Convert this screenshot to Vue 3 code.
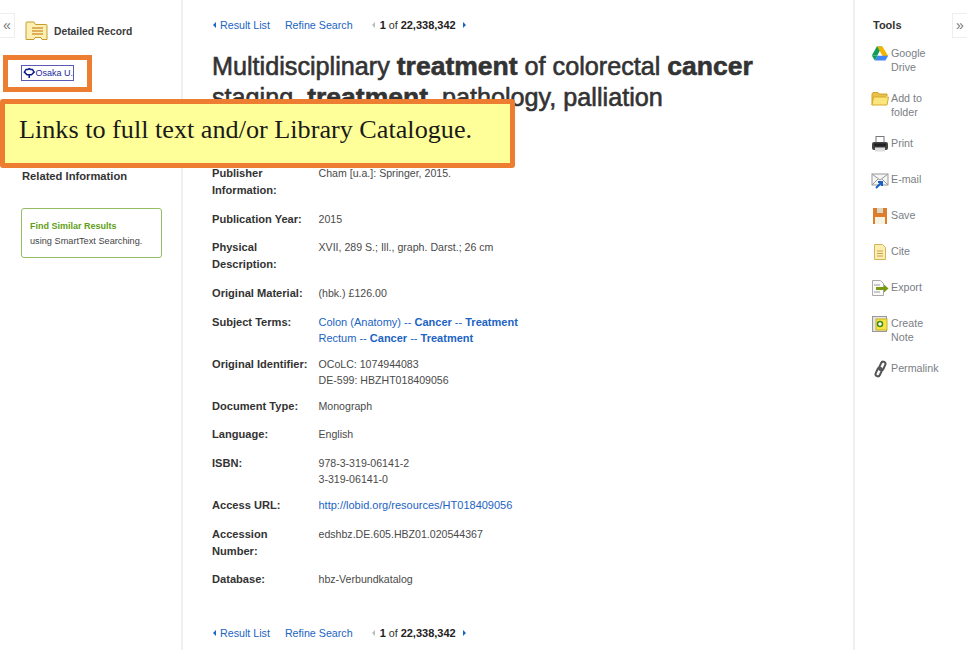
<script setup>
const rows = [
  { label: 'Publisher Information:', lines: [[{ t: 'Cham [u.a.]: Springer, 2015.' }]], narrow: true },
  { label: 'Publication Year:', lines: [[{ t: '2015' }]] },
  { label: 'Physical Description:', lines: [[{ t: 'XVII, 289 S.; Ill., graph. Darst.; 26 cm' }]], narrow: true },
  { label: 'Original Material:', lines: [[{ t: '(hbk.) £126.00' }]] },
  {
    label: 'Subject Terms:',
    lines: [
      [{ t: 'Colon (Anatomy) -- ', a: 1 }, { t: 'Cancer', a: 1, b: 1 }, { t: ' -- ', a: 1 }, { t: 'Treatment', a: 1, b: 1 }],
      [{ t: 'Rectum -- ', a: 1 }, { t: 'Cancer', a: 1, b: 1 }, { t: ' -- ', a: 1 }, { t: 'Treatment', a: 1, b: 1 }]
    ]
  },
  { label: 'Original Identifier:', lines: [[{ t: 'OCoLC: 1074944083' }], [{ t: 'DE-599: HBZHT018409056' }]] },
  { label: 'Document Type:', lines: [[{ t: 'Monograph' }]] },
  { label: 'Language:', lines: [[{ t: 'English' }]] },
  { label: 'ISBN:', lines: [[{ t: '978-3-319-06141-2' }], [{ t: '3-319-06141-0' }]] },
  { label: 'Access URL:', lines: [[{ t: 'http://lobid.org/resources/HT018409056', a: 1 }]] },
  { label: 'Accession Number:', lines: [[{ t: 'edshbz.DE.605.HBZ01.020544367' }]], narrow: true },
  { label: 'Database:', lines: [[{ t: 'hbz-Verbundkatalog' }]] }
]
const tools = [
  { id: 'drive', lines: ['Google', 'Drive'] },
  { id: 'folder', lines: ['Add to', 'folder'] },
  { id: 'print', lines: ['Print'] },
  { id: 'mail', lines: ['E-mail'] },
  { id: 'save', lines: ['Save'] },
  { id: 'cite', lines: ['Cite'] },
  { id: 'export', lines: ['Export'] },
  { id: 'note', lines: ['Create', 'Note'] },
  { id: 'link', lines: ['Permalink'] }
]
</script>

<template>
  <div class="page">
    <aside class="left">
      <div class="tab tab-left">«</div>
      <div class="record-head">
        <svg width="23" height="20" viewBox="0 0 23 20">
          <path d="M1 18.500V2q0-1 1-1h7l1.500 2.500H21q1 0 1 1v14h-5l-1-2h-6l-1 2z" fill="#fcefb4" stroke="#c79c2c"/>
          <path d="M7 7h11M7 10h11M7 13h11" stroke="#d59a3c" stroke-width="1.500"/>
        </svg>
        <span>Detailed Record</span>
      </div>
      <div class="logo-row">
        <div class="logo">
          <svg width="14" height="14" viewBox="0 0 14 14">
            <path d="M7 12.500V9M7 2l1.500 1 2 0 2 3-3 3H4.500l-3-3 2-3 2 0z" fill="#fff" stroke="#0b1a8a" stroke-width="1.700"/>
          </svg>
          <span>Osaka U.</span>
        </div>
      </div>
      <h3 class="related">Related Information</h3>
      <div class="similar">
        <strong>Find Similar Results</strong>
        <span>using SmartText Searching.</span>
      </div>
    </aside>

    <main class="center">
      <nav class="nav">
        <span class="tri tri-l"></span><a>Result List</a>
        <a class="refine">Refine Search</a>
        <span class="pager">
          <span class="tri tri-l muted"></span>
          <b>1</b> of <b>22,338,342</b>
          <span class="tri tri-r"></span>
        </span>
      </nav>
      <h1 class="title">Multidisciplinary <b>treatment</b> of colorectal <b>cancer</b> staging, <b>treatment</b>, pathology, palliation</h1>
      <div class="rows">
        <div v-for="r in rows" :key="r.label" class="row">
          <div class="label" :class="{ narrow: r.narrow }">{{ r.label }}</div>
          <div class="value">
            <div v-for="(l, i) in r.lines" :key="i">
              <span v-for="(p, j) in l" :key="j" :class="{ link: p.a, bold: p.b }">{{ p.t }}</span>
            </div>
          </div>
        </div>
      </div>
      <nav class="nav nav-bottom">
        <span class="tri tri-l"></span><a>Result List</a>
        <a class="refine">Refine Search</a>
        <span class="pager">
          <span class="tri tri-l muted"></span>
          <b>1</b> of <b>22,338,342</b>
          <span class="tri tri-r"></span>
        </span>
      </nav>
    </main>

    <aside class="right">
      <div class="tab tab-right">»</div>
      <h3 class="tools-head">Tools</h3>
      <ul class="tools">
        <li v-for="t in tools" :key="t.id" class="tool" :class="'t-' + t.id">
          <svg width="18" height="18" viewBox="0 0 18 18" class="tool-icon">
            <template v-if="t.id === 'drive'">
              <path d="M5.800 1.500h5.400L6.200 10.500H.8z" fill="#0f9d58"/>
              <path d="M6.200 1.500h5.200l5.800 9.500h-5.600z" fill="#f4b400"/>
              <path d="M3.800 15.500l2.800-4.800h10.600l-2.800 4.800z" fill="#4285f4"/>
              <path d="M.8 10.500l3 5 2.900-5z" fill="#0f9d58"/>
            </template>
            <template v-else-if="t.id === 'folder'">
              <path d="M1 15V4l1-1.500h5l1 1.500h8v2" fill="#e8c04a" stroke="#d1a227"/>
              <path d="M1 15l1.500-8h15l-1.500 8z" fill="#fbe67e" stroke="#d6ab2c"/>
            </template>
            <template v-else-if="t.id === 'print'">
              <rect x="5" y="1.500" width="8" height="6" fill="#fff" stroke="#777"/>
              <rect x="1" y="7" width="16" height="8" rx="2" fill="#444"/>
              <rect x="3" y="8.500" width="12" height="3" fill="#222"/>
              <rect x="4" y="12.500" width="10" height="4" fill="#ddd"/>
            </template>
            <template v-else-if="t.id === 'mail'">
              <rect x="1" y="3" width="16" height="11" fill="#f5f5f5" stroke="#999"/>
              <path d="M1 3l8 6 8-6M1 14l6-6M17 14l-6-6" fill="none" stroke="#999"/>
              <path d="M5 17l5-5M7 11h4v4" fill="none" stroke="#1a5fc4" stroke-width="2"/>
            </template>
            <template v-else-if="t.id === 'save'">
              <rect x="2" y="1" width="14" height="16" fill="#dd7d2b"/>
              <rect x="6" y="1" width="6" height="5" fill="#d9d6c6"/>
              <rect x="4" y="10" width="10" height="7" fill="#f7f3e2"/>
            </template>
            <template v-else-if="t.id === 'cite'">
              <path d="M3.500 1.500h8l3 3v12h-11z" fill="#fbeeb0" stroke="#d4b45a"/>
              <path d="M6 8h6M6 10.500h6M6 13h6" stroke="#c9a255"/>
            </template>
            <template v-else-if="t.id === 'export'">
              <path d="M1.500 1.500h8l3 3v12h-11z" fill="#fafafa" stroke="#aaa"/>
              <path d="M3 6h6M3 13h6" stroke="#999"/>
              <path d="M5 8h8V5.500l4.500 4-4.500 4V11H5z" fill="#7a9a12"/>
            </template>
            <template v-else-if="t.id === 'note'">
              <rect x="1.500" y="1.500" width="14" height="15" fill="#e4e4e4" stroke="#999"/>
              <rect x="5" y="4" width="11" height="11" fill="#f7e548" stroke="#c9b21d"/>
              <circle cx="9" cy="9" r="2.500" fill="#fff" stroke="#3f8a1b" stroke-width="1.500"/>
            </template>
            <template v-else>
              <g fill="none" stroke="#555" stroke-width="2">
                <rect x="9" y="1.500" width="4.500" height="9" rx="2.250" transform="rotate(25 11.250 6)"/>
                <rect x="5.500" y="7.500" width="4.500" height="9" rx="2.250" transform="rotate(25 7.750 12)"/>
              </g>
            </template>
          </svg>
          <span class="tool-text"><span v-for="l in t.lines" :key="l">{{ l }}</span></span>
        </li>
      </ul>
    </aside>

    <div class="hl-logo"></div>
    <div class="callout">Links to full text and/or Library Catalogue.</div>
  </div>
</template>

<style>
html, body { margin: 0; background: #fff; }
</style>

<style scoped>
.page {
  position: relative;
  display: flex;
  width: 967px;
  height: 650px;
  overflow: hidden;
  background: #fff;
  font-family: "Liberation Sans", Arial, sans-serif;
  font-size: 10.700px;
  color: #333;
}
.left {
  position: relative;
  flex: 0 0 183px;
  box-sizing: border-box;
  border-right: 2px solid #efefef;
  padding: 20px 0 0 21px;
}
.tab {
  position: absolute;
  top: 13px;
  box-sizing: border-box;
  width: 15px;
  height: 25px;
  background: #fff;
  border: 1px solid #eee;
  color: #777;
  font-size: 14px;
  line-height: 22px;
  text-align: center;
}
.tab-left { left: 0; border-left: 0; }
.tab-right { right: 0; border-right: 0; }
.record-head {
  display: flex;
  align-items: center;
  gap: 6px;
  margin-left: 4px;
  height: 22px;
  font-weight: 700;
  font-size: 10.300px;
  color: #3b3b3b;
}
.logo-row { margin-top: 23px; height: 16px; display: flex; }
.logo {
  box-sizing: border-box;
  width: 53px;
  height: 16px;
  border: 1px solid #5a5ab5;
  display: flex;
  align-items: center;
  padding-left: 1px;
  color: #1b2a9c;
  font-size: 9px;
  line-height: 14px;
  white-space: nowrap;
}
.related {
  margin: 88px 0 0 1px;
  font-size: 11.200px;
  line-height: 14px;
  color: #333;
}
.similar {
  display: flex;
  flex-direction: column;
  box-sizing: border-box;
  width: 141px;
  height: 50px;
  margin-top: 25px;
  padding: 10px 8px 0;
  border: 1px solid #94bd66;
  border-radius: 3px;
  font-size: 9.200px;
  line-height: 15px;
  color: #444;
}
.similar strong { color: #5f9e17; font-size: 9px; }
.center {
  flex: 1;
  padding: 0 0 0 29px;
  min-width: 0;
}
.nav {
  display: flex;
  align-items: center;
  height: 14px;
  margin-top: 18px;
  white-space: nowrap;
  color: #1c63c4;
}
.refine { margin-left: 15px; }
.pager { margin-left: 19px; color: #333; display: inline-flex; align-items: center; white-space: pre; }
.pager b { color: #222; font-size: 11px; }
.tri { display: inline-block; width: 0; height: 0; border-style: solid; margin: 0 4px 0 1px; }
.tri-l { border-width: 3.500px 3px 3.500px 0; border-color: transparent #1c63c4 transparent transparent; }
.tri-r { border-width: 3.500px 0 3.500px 3px; border-color: transparent transparent transparent #1c63c4; margin: 0 0 0 7px; }
.muted { border-right-color: #bbb; margin: 0 5px 0 0; }
.title {
  margin: 19px 0 0;
  width: 570px;
  font-size: 25.200px;
  line-height: 31px;
  font-weight: 400;
  color: #333;
  -webkit-text-stroke: 0.6px #333;
}
.title b { font-size: 26.500px; }
.rows { margin-top: 52px; }
.row { display: flex; }
.label {
  flex: 0 0 106.500px;
  box-sizing: border-box;
  padding-bottom: 12px;
  font-size: 11.100px;
  font-weight: 700;
  line-height: 16.750px;
  color: #333;
}
.label.narrow { padding-right: 30px; }
.value {
  padding-bottom: 10px;
  line-height: 16px;
  font-size: 10.600px;
  color: #4a4a4a;
}
.link { color: #1c63c4; font-size: 11px; }
.bold { font-weight: 700; }
.nav-bottom { margin-top: 26px; }
.right {
  position: relative;
  flex: 0 0 114px;
  box-sizing: border-box;
  border-left: 2px solid #efefef;
  padding-left: 18px;
}
.tools-head {
  margin: 18px 0 0;
  font-size: 11px;
  line-height: 14px;
  color: #333;
}
.tools { list-style: none; margin: 15px 0 0 -2px; padding: 0; }
.tool {
  display: flex;
  gap: 2px;
  min-height: 18px;
  margin-bottom: 18px;
  color: #7b8085;
  line-height: 13.500px;
}
.tool-icon { flex: none; margin-top: -2px; }
.tool-text { display: flex; flex-direction: column; }
.hl-logo {
  position: absolute;
  left: 3px;
  top: 55px;
  width: 89px;
  height: 37px;
  box-sizing: border-box;
  border: 5px solid #ed7d31;
}
.callout {
  position: absolute;
  left: 0;
  top: 99px;
  width: 515px;
  height: 69px;
  box-sizing: border-box;
  border: 5px solid #ed7d31;
  border-radius: 3px;
  background: #ffff99;
  padding: 6px 0 0 14px;
  font-family: "Liberation Serif", serif;
  font-size: 26.200px;
  line-height: 40px;
  color: #1a1a1a;
  white-space: nowrap;
}
</style>
